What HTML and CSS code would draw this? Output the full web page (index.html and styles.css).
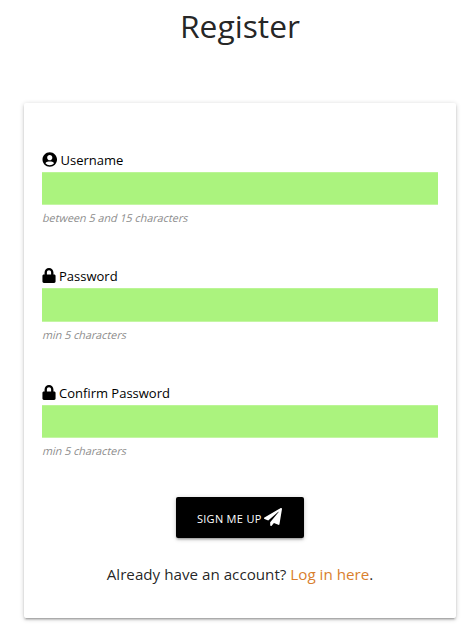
FILE: index.html
```html
<!DOCTYPE html>
<html lang="en">
<head>
<meta charset="utf-8">
<title>Register</title>
<link rel="stylesheet" href="styles.css">
</head>
<body>
<h1 class="title">Register</h1>
<form class="card">
  <div class="field">
    <label class="label" for="username"><svg class="icon user" viewBox="0 0 496 512"><path d="M248 8C111 8 0 119 0 256s111 248 248 248 248-111 248-248S385 8 248 8zm0 96c48.600 0 88 39.400 88 88s-39.400 88-88 88-88-39.400-88-88 39.400-88 88-88zm0 344c-58.700 0-111.300-26.600-146.500-68.200 18.800-35.400 55.600-59.800 98.500-59.800 2.400 0 4.800.4 7.100 1.100 13 4.200 26.600 6.900 40.900 6.900 14.300 0 28-2.700 40.900-6.900 2.300-.7 4.700-1.100 7.100-1.100 42.900 0 79.700 24.400 98.500 59.800C359.300 421.400 306.700 448 248 448z"/></svg><span>Username</span></label>
    <input class="input" id="username" type="text">
    <span class="helper">between 5 and 15 characters</span>
  </div>
  <div class="field">
    <label class="label" for="password"><svg class="icon lock" viewBox="0 0 448 512"><path d="M400 224h-24v-72C376 68.200 307.800 0 224 0S72 68.200 72 152v72H48c-26.500 0-48 21.500-48 48v192c0 26.500 21.500 48 48 48h352c26.500 0 48-21.500 48-48V272c0-26.500-21.500-48-48-48zm-104 0H152v-72c0-39.700 32.300-72 72-72s72 32.300 72 72v72z"/></svg><span>Password</span></label>
    <input class="input tall" id="password" type="password">
    <span class="helper">min 5 characters</span>
  </div>
  <div class="field">
    <label class="label" for="confirm"><svg class="icon lock" viewBox="0 0 448 512"><path d="M400 224h-24v-72C376 68.200 307.800 0 224 0S72 68.200 72 152v72H48c-26.500 0-48 21.500-48 48v192c0 26.500 21.500 48 48 48h352c26.500 0 48-21.500 48-48V272c0-26.500-21.500-48-48-48zm-104 0H152v-72c0-39.700 32.300-72 72-72s72 32.300 72 72v72z"/></svg><span>Confirm Password</span></label>
    <input class="input" id="confirm" type="password">
    <span class="helper">min 5 characters</span>
  </div>
  <button class="button" type="button"><span>SIGN ME UP</span><svg class="plane" viewBox="0 0 512 512"><path d="M476 3.200L12.500 270.600c-18.100 10.400-15.800 35.600 2.200 43.200L121 358.400l287.300-253.200c5.500-4.900 13.300 2.600 8.600 8.300L176 407v80.500c0 23.600 28.500 32.900 42.500 15.800L282 426l124.600 52.200c14.200 6 30.400-2.900 33-18.200l72-432C515 7.800 493.300-6.800 476 3.200z"/></svg></button>
  <p class="login">Already have an account? <a class="link" href="#">Log in here</a>.</p>
</form>
</body>
</html>
```
FILE: styles.css
```css
* { box-sizing: border-box; }
body {
  margin: 0;
  height: 625px;
  overflow: hidden;
  background: #fff;
  font-family: "Open Sans", sans-serif;
  color: rgba(0, 0, 0, 0.87);
}
.title {
  margin: 4px 0 55px;
  padding-left: 7px;
  font-size: 31.800px;
  line-height: 44px;
  font-weight: 400;
  text-align: center;
}
.card {
  width: 432px;
  height: 515px;
  margin-left: 24px;
  padding: 46px 18px 0;
  display: flex;
  flex-direction: column;
  border-radius: 2px;
  box-shadow: 0 2px 2px 0 rgba(0,0,0,.14), 0 3px 1px -2px rgba(0,0,0,.12), 0 1px 5px 0 rgba(0,0,0,.2);
}
.field { height: 116.400px; display: flex; flex-direction: column; }
.label {
  display: flex;
  align-items: center;
  gap: 3px;
  height: 22px;
  margin-bottom: 1px;
  font-size: 13px;
  line-height: 20px;
  color: #000;
}
.icon { height: 15px; margin-top: -1px; }
.user { width: 15.500px; }
.lock { width: 14px; }
.input {
  flex: none;
  width: 396px;
  height: 33px;
  margin: 0;
  border: 0;
  outline: 0;
  background: #abf37e;
  border-top: 1px solid #bbf596;
  border-bottom: 1px solid #c4f6a4;
}
.tall { height: 34px; }
.helper {
  align-self: flex-start;
  margin-top: 5px;
  font-size: 10.800px;
  line-height: 16px;
  transform: skewX(-14deg);
  transform-origin: 0 12px;
  color: #8c8c8c;
}
.button {
  align-self: center;
  display: flex;
  align-items: center;
  justify-content: center;
  gap: 2.500px;
  width: 128px;
  height: 41px;
  margin-top: -1px;
  padding: 0 1px 0 0;
  border: 0;
  border-radius: 2px;
  background: #000;
  color: #fff;
  font: 11px "Open Sans", sans-serif;
  letter-spacing: 0.3px;
  box-shadow: 0 2px 2px 0 rgba(0,0,0,.14), 0 3px 1px -2px rgba(0,0,0,.12), 0 1px 5px 0 rgba(0,0,0,.2);
}
.button span { padding-top: 1px; }
.plane { width: 18px; height: 18px; margin-top: -2px; fill: #fff; }
.login {
  margin: 25px 0 0;
  font-size: 15.200px;
  line-height: 22px;
  text-align: center;
}
.link { color: #d97f2e; text-decoration: none; }
```
